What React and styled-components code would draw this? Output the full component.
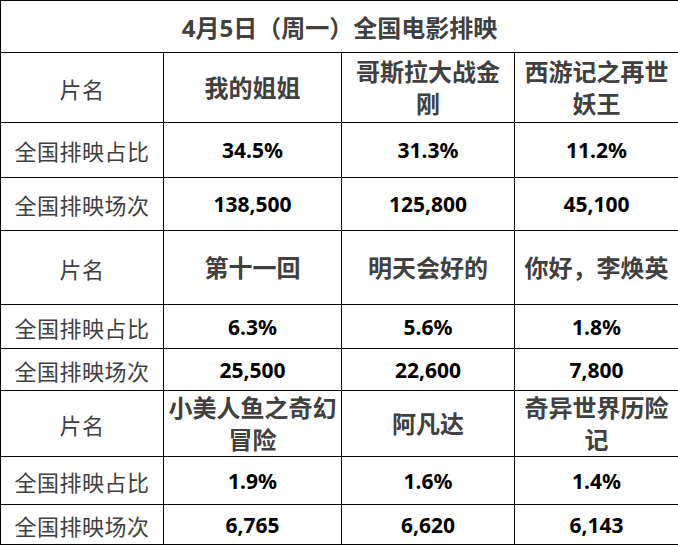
import React from "react";
import styled, { createGlobalStyle } from "styled-components";

const GlobalStyle = createGlobalStyle`
  body {
    margin: 0;
    background: #fff;
    font-family: "Noto Sans", "Noto Sans CJK SC", sans-serif;
  }
`;

const groups = [
  {
    names: ["我的姐姐", "哥斯拉大战金刚", "西游记之再世妖王"],
    share: ["34.5%", "31.3%", "11.2%"],
    shows: ["138,500", "125,800", "45,100"],
    heights: [70, 55, 53],
  },
  {
    names: ["第十一回", "明天会好的", "你好，李焕英"],
    share: ["6.3%", "5.6%", "1.8%"],
    shows: ["25,500", "22,600", "7,800"],
    heights: [74, 44, 42],
  },
  {
    names: ["小美人鱼之奇幻冒险", "阿凡达", "奇异世界历险记"],
    share: ["1.9%", "1.6%", "1.4%"],
    shows: ["6,765", "6,620", "6,143"],
    heights: [66, 48, 40],
  },
];

const App = () => {
  return (
    <>
      <GlobalStyle />
      <Table>
        <colgroup>
          <col style={{ width: 163 }} />
          <col style={{ width: 178 }} />
          <col style={{ width: 173 }} />
          <col style={{ width: 164 }} />
        </colgroup>
        <tbody>
          <Row $h={52}>
            <Title colSpan={4}>4月5日（周一）全国电影排映</Title>
          </Row>
          {groups.map((g, i) => (
            <React.Fragment key={i}>
              <Row $h={g.heights[0]}>
                <Label>片名</Label>
                {g.names.map((n) => (
                  <Name key={n}>{n}</Name>
                ))}
              </Row>
              <Row $h={g.heights[1]}>
                <Label>全国排映占比</Label>
                {g.share.map((v, j) => (
                  <Value key={j}>{v}</Value>
                ))}
              </Row>
              <Row $h={g.heights[2]}>
                <Label>全国排映场次</Label>
                {g.shows.map((v, j) => (
                  <Value key={j}>{v}</Value>
                ))}
              </Row>
            </React.Fragment>
          ))}
        </tbody>
      </Table>
    </>
  );
};

// Styled Components
const Table = styled.table`
  width: 678px;
  border-collapse: collapse;
  table-layout: fixed;

  td {
    border: 1px solid #000;
    text-align: center;
    vertical-align: middle;
    padding: 0 4px;
  }
`;

const Row = styled.tr`
  height: ${(p) => p.$h}px;
`;

const Title = styled.td`
  font-size: 24px;
  font-weight: bold;
  color: #404040;
`;

const Label = styled.td`
  font-size: 22px;
  color: #404040;
  letter-spacing: 0.5px;
`;

const Name = styled.td`
  font-size: 24px;
  font-weight: bold;
  color: #404040;
  line-height: 32px;
`;

const Value = styled.td`
  font-size: 21px;
  font-weight: bold;
  color: #000;
`;

export default App;
